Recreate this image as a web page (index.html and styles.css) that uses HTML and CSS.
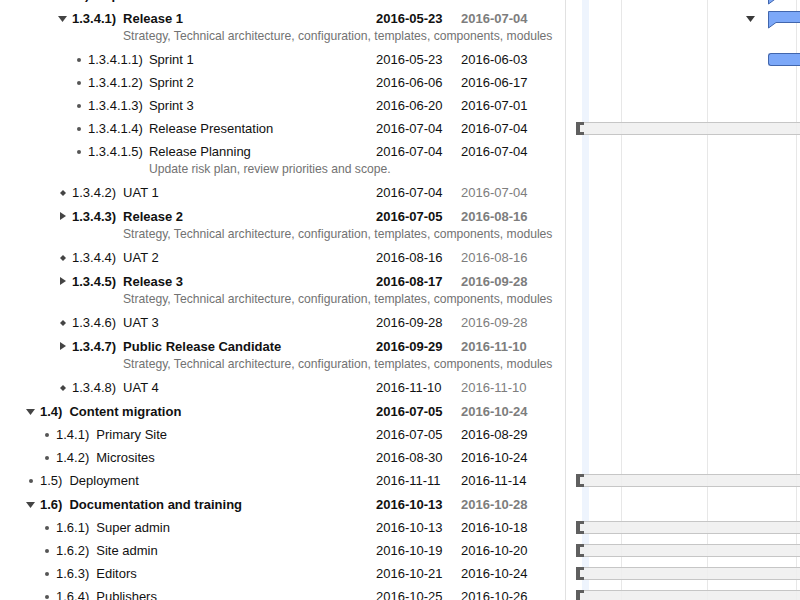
FILE: index.html
```html
<!DOCTYPE html>
<html>
<head>
<meta charset="utf-8">
<link rel="stylesheet" href="styles.css">
</head>
<body>
<div class="list">

  <div class="row bold">
    <div class="tree">
      <div class="line"><div class="name l2"><span class="ico"><svg class="tri-d" width="9" height="6" viewBox="0 0 9 6"><path d="M0 0H9L4.5 6Z"/></svg></span><span class="num">1.3.4)</span><span class="title">Implementation</span></div><div class="start">2016-05-23</div><div class="end muted">2016-11-10</div></div>
    </div>
    <div class="gantt"><div class="gline top"><svg class="tri-d gtri" width="9" height="6" viewBox="0 0 9 6"><path d="M0 0H9L4.5 6Z"/></svg><svg class="sum" width="40" height="18" viewBox="0 0 40 18"><path d="M0.5 0.5H41V11.5H8L0.5 17Z"/></svg></div></div>
  </div>

  <div class="row bold">
    <div class="tree">
      <div class="line"><div class="name l3"><span class="ico"><svg class="tri-d" width="9" height="6" viewBox="0 0 9 6"><path d="M0 0H9L4.5 6Z"/></svg></span><span class="num">1.3.4.1)</span><span class="title">Release 1</span></div><div class="start">2016-05-23</div><div class="end muted">2016-07-04</div></div>
      <div class="desc d3">Strategy, Technical architecture, configuration, templates, components, modules</div>
    </div>
    <div class="gantt"><div class="gline top"><svg class="tri-d gtri" width="9" height="6" viewBox="0 0 9 6"><path d="M0 0H9L4.5 6Z"/></svg><svg class="sum" width="40" height="18" viewBox="0 0 40 18"><path d="M0.5 0.5H41V11.5H8L0.5 17Z"/></svg></div></div>
  </div>

  <div class="row">
    <div class="tree"><div class="line"><div class="name l4"><span class="ico"><span class="dot"></span></span><span class="num">1.3.4.1.1)</span><span class="title">Sprint 1</span></div><div class="start">2016-05-23</div><div class="end">2016-06-03</div></div></div>
    <div class="gantt"><div class="gline"><div class="task"></div></div></div>
  </div>

  <div class="row">
    <div class="tree"><div class="line"><div class="name l4"><span class="ico"><span class="dot"></span></span><span class="num">1.3.4.1.2)</span><span class="title">Sprint 2</span></div><div class="start">2016-06-06</div><div class="end">2016-06-17</div></div></div>
    <div class="gantt"><div class="gline"></div></div>
  </div>

  <div class="row">
    <div class="tree"><div class="line"><div class="name l4"><span class="ico"><span class="dot"></span></span><span class="num">1.3.4.1.3)</span><span class="title">Sprint 3</span></div><div class="start">2016-06-20</div><div class="end">2016-07-01</div></div></div>
    <div class="gantt"><div class="gline"></div></div>
  </div>

  <div class="row">
    <div class="tree"><div class="line"><div class="name l4"><span class="ico"><span class="dot"></span></span><span class="num">1.3.4.1.4)</span><span class="title">Release Presentation</span></div><div class="start">2016-07-04</div><div class="end">2016-07-04</div></div></div>
    <div class="gantt"><div class="gline"><div class="gbar"></div></div></div>
  </div>

  <div class="row">
    <div class="tree">
      <div class="line"><div class="name l4"><span class="ico"><span class="dot"></span></span><span class="num">1.3.4.1.5)</span><span class="title">Release Planning</span></div><div class="start">2016-07-04</div><div class="end">2016-07-04</div></div>
      <div class="desc d4">Update risk plan, review priorities and scope.</div>
    </div>
    <div class="gantt"><div class="gline"></div></div>
  </div>

  <div class="row">
    <div class="tree"><div class="line"><div class="name l3"><span class="ico"><svg class="dia" width="6" height="6" viewBox="0 0 6 6"><path d="M3 0L6 3L3 6L0 3Z"/></svg></span><span class="num">1.3.4.2)</span><span class="title">UAT 1</span></div><div class="start">2016-07-04</div><div class="end muted">2016-07-04</div></div></div>
    <div class="gantt"><div class="gline"></div></div>
  </div>

  <div class="row bold">
    <div class="tree">
      <div class="line"><div class="name l3"><span class="ico"><svg class="tri-r" width="6" height="8" viewBox="0 0 6 8"><path d="M0 0L6 4L0 8Z"/></svg></span><span class="num">1.3.4.3)</span><span class="title">Release 2</span></div><div class="start">2016-07-05</div><div class="end muted">2016-08-16</div></div>
      <div class="desc d3">Strategy, Technical architecture, configuration, templates, components, modules</div>
    </div>
    <div class="gantt"><div class="gline"></div></div>
  </div>

  <div class="row">
    <div class="tree"><div class="line"><div class="name l3"><span class="ico"><svg class="dia" width="6" height="6" viewBox="0 0 6 6"><path d="M3 0L6 3L3 6L0 3Z"/></svg></span><span class="num">1.3.4.4)</span><span class="title">UAT 2</span></div><div class="start">2016-08-16</div><div class="end muted">2016-08-16</div></div></div>
    <div class="gantt"><div class="gline"></div></div>
  </div>

  <div class="row bold">
    <div class="tree">
      <div class="line"><div class="name l3"><span class="ico"><svg class="tri-r" width="6" height="8" viewBox="0 0 6 8"><path d="M0 0L6 4L0 8Z"/></svg></span><span class="num">1.3.4.5)</span><span class="title">Release 3</span></div><div class="start">2016-08-17</div><div class="end muted">2016-09-28</div></div>
      <div class="desc d3">Strategy, Technical architecture, configuration, templates, components, modules</div>
    </div>
    <div class="gantt"><div class="gline"></div></div>
  </div>

  <div class="row">
    <div class="tree"><div class="line"><div class="name l3"><span class="ico"><svg class="dia" width="6" height="6" viewBox="0 0 6 6"><path d="M3 0L6 3L3 6L0 3Z"/></svg></span><span class="num">1.3.4.6)</span><span class="title">UAT 3</span></div><div class="start">2016-09-28</div><div class="end muted">2016-09-28</div></div></div>
    <div class="gantt"><div class="gline"></div></div>
  </div>

  <div class="row bold">
    <div class="tree">
      <div class="line"><div class="name l3"><span class="ico"><svg class="tri-r" width="6" height="8" viewBox="0 0 6 8"><path d="M0 0L6 4L0 8Z"/></svg></span><span class="num">1.3.4.7)</span><span class="title">Public Release Candidate</span></div><div class="start">2016-09-29</div><div class="end muted">2016-11-10</div></div>
      <div class="desc d3">Strategy, Technical architecture, configuration, templates, components, modules</div>
    </div>
    <div class="gantt"><div class="gline"></div></div>
  </div>

  <div class="row">
    <div class="tree"><div class="line"><div class="name l3"><span class="ico"><svg class="dia" width="6" height="6" viewBox="0 0 6 6"><path d="M3 0L6 3L3 6L0 3Z"/></svg></span><span class="num">1.3.4.8)</span><span class="title">UAT 4</span></div><div class="start">2016-11-10</div><div class="end muted">2016-11-10</div></div></div>
    <div class="gantt"><div class="gline"></div></div>
  </div>

  <div class="row bold">
    <div class="tree"><div class="line"><div class="name l1"><span class="ico"><svg class="tri-d" width="9" height="6" viewBox="0 0 9 6"><path d="M0 0H9L4.5 6Z"/></svg></span><span class="num">1.4)</span><span class="title">Content migration</span></div><div class="start">2016-07-05</div><div class="end muted">2016-10-24</div></div></div>
    <div class="gantt"><div class="gline"></div></div>
  </div>

  <div class="row">
    <div class="tree"><div class="line"><div class="name l2"><span class="ico"><span class="dot"></span></span><span class="num">1.4.1)</span><span class="title">Primary Site</span></div><div class="start">2016-07-05</div><div class="end">2016-08-29</div></div></div>
    <div class="gantt"><div class="gline"></div></div>
  </div>

  <div class="row">
    <div class="tree"><div class="line"><div class="name l2"><span class="ico"><span class="dot"></span></span><span class="num">1.4.2)</span><span class="title">Microsites</span></div><div class="start">2016-08-30</div><div class="end">2016-10-24</div></div></div>
    <div class="gantt"><div class="gline"></div></div>
  </div>

  <div class="row">
    <div class="tree"><div class="line"><div class="name l1"><span class="ico"><span class="dot"></span></span><span class="num">1.5)</span><span class="title">Deployment</span></div><div class="start">2016-11-11</div><div class="end">2016-11-14</div></div></div>
    <div class="gantt"><div class="gline"><div class="gbar"></div></div></div>
  </div>

  <div class="row bold">
    <div class="tree"><div class="line"><div class="name l1"><span class="ico"><svg class="tri-d" width="9" height="6" viewBox="0 0 9 6"><path d="M0 0H9L4.5 6Z"/></svg></span><span class="num">1.6)</span><span class="title">Documentation and training</span></div><div class="start">2016-10-13</div><div class="end muted">2016-10-28</div></div></div>
    <div class="gantt"><div class="gline"></div></div>
  </div>

  <div class="row">
    <div class="tree"><div class="line"><div class="name l2"><span class="ico"><span class="dot"></span></span><span class="num">1.6.1)</span><span class="title">Super admin</span></div><div class="start">2016-10-13</div><div class="end">2016-10-18</div></div></div>
    <div class="gantt"><div class="gline"><div class="gbar"></div></div></div>
  </div>

  <div class="row">
    <div class="tree"><div class="line"><div class="name l2"><span class="ico"><span class="dot"></span></span><span class="num">1.6.2)</span><span class="title">Site admin</span></div><div class="start">2016-10-19</div><div class="end">2016-10-20</div></div></div>
    <div class="gantt"><div class="gline"><div class="gbar"></div></div></div>
  </div>

  <div class="row">
    <div class="tree"><div class="line"><div class="name l2"><span class="ico"><span class="dot"></span></span><span class="num">1.6.3)</span><span class="title">Editors</span></div><div class="start">2016-10-21</div><div class="end">2016-10-24</div></div></div>
    <div class="gantt"><div class="gline"><div class="gbar"></div></div></div>
  </div>

  <div class="row">
    <div class="tree"><div class="line"><div class="name l2"><span class="ico"><span class="dot"></span></span><span class="num">1.6.4)</span><span class="title">Publishers</span></div><div class="start">2016-10-25</div><div class="end">2016-10-26</div></div></div>
    <div class="gantt"><div class="gline"><div class="gbar"></div></div></div>
  </div>

</div>
</body>
</html>
```

FILE: styles.css
```css
html, body {
  margin: 0;
  padding: 0;
  background: #fff;
  overflow: hidden;
}

body {
  font-family: "Liberation Sans", Arial, Helvetica, sans-serif;
  font-size: 13px;
  color: #111;
  width: 800px;
  height: 600px;
}

.list {
  margin-top: -18px;
  background:
    linear-gradient(to right,
      transparent 565px, #e1e1e1 565px, #e1e1e1 566px, transparent 566px,
      transparent 582px, #eef4fd 582px, #eef4fd 589px, transparent 589px,
      transparent 621px, #e7e7e7 621px, #e7e7e7 622px, transparent 622px,
      transparent 707px, #e7e7e7 707px, #e7e7e7 708px, transparent 708px,
      transparent 796px, #e7e7e7 796px, #e7e7e7 797px, transparent 797px);
}

.row {
  display: grid;
  grid-template-columns: 565px 235px;
}

.line {
  display: flex;
  align-items: center;
  height: 23px;
  white-space: nowrap;
}

.row.bold .line {
  height: 24px;
  font-weight: bold;
}

.name {
  flex: 0 0 auto;
  width: 376px;
  display: flex;
  align-items: center;
  box-sizing: border-box;
}

.l1 { padding-left: 26px; }
.l2 { padding-left: 42px; }
.l3 { padding-left: 58px; }
.l4 { padding-left: 74px; }

.ico {
  width: 14px;
  height: 10px;
  display: flex;
  align-items: center;
  flex: 0 0 14px;
}

.ico svg path { fill: #444; }

.tri-d { margin-top: 1px; }
.tri-r { margin-left: 2px; }
.dia { margin-left: 2px; }

.dot {
  width: 4px;
  height: 4px;
  border-radius: 50%;
  background: #555;
  margin-left: 3px;
}

.title {
  margin-left: 7px;
}

.l4 .title {
  margin-left: 6px;
}

.start {
  width: 85px;
  flex: 0 0 85px;
}

.end {
  flex: 1;
}

.muted {
  color: #7d7d7d;
}

.desc {
  font-size: 12.15px;
  line-height: 13px;
  height: 18px;
  box-sizing: border-box;
  padding-bottom: 5px;
  color: #727272;
  white-space: nowrap;
}

.d3 { padding-left: 123px; }
.d4 { padding-left: 149px; }

.gantt {
  overflow: hidden;
}

.gline {
  display: flex;
  align-items: center;
  height: 23px;
}

.row.bold .gline {
  height: 24px;
}

.gline.top {
  align-items: flex-start;
}

.gtri {
  margin-left: 181px;
  margin-top: 10px;
  flex: 0 0 auto;
}

.gtri path { fill: #3a3a3a; }

.sum {
  margin-left: 13px;
  margin-top: 5px;
  flex: 0 0 auto;
  overflow: visible;
}

.sum path {
  fill: #7ca8f8;
  stroke: #4166ad;
  stroke-width: 1;
}

.task {
  margin-left: 203px;
  flex: 1;
  height: 13px;
  box-sizing: border-box;
  background: #7ca8f8;
  border: 1px solid #4166ad;
  border-right: 0;
  border-radius: 3px 0 0 3px;
}

.gbar {
  margin-left: 11px;
  flex: 1;
  height: 13px;
  box-sizing: border-box;
  background: rgba(238, 238, 238, 0.85);
  border-top: 1px solid #c6c6c6;
  border-bottom: 1px solid #c6c6c6;
}

.gbar::before {
  content: "";
  display: block;
  width: 8px;
  height: 13px;
  margin-top: -1px;
  box-sizing: border-box;
  border: 3px solid #5f5f5f;
  border-left-width: 4px;
  border-right: 0;
}
```
